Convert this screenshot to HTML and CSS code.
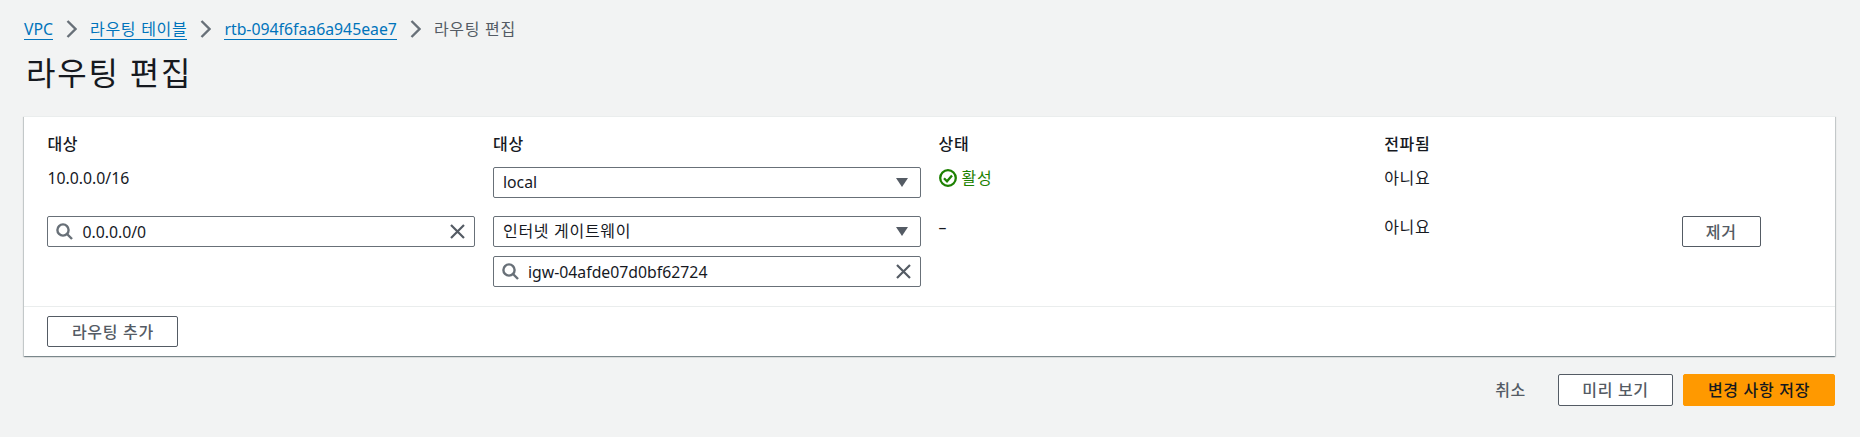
FILE: index.html
```html
<!DOCTYPE html>
<html lang="ko">
<head>
<meta charset="utf-8">
<title>라우팅 편집</title>
<link rel="stylesheet" href="styles.css">
</head>
<body>
<nav class="crumbs">
  <a class="crumb-link latin" href="#">VPC</a>
  <svg class="chev" viewBox="0 0 11 18"><path d="M1.5 1 9.5 9 1.5 17"/></svg>
  <a class="crumb-link" href="#">라우팅 테이블</a>
  <svg class="chev" viewBox="0 0 11 18"><path d="M1.5 1 9.5 9 1.5 17"/></svg>
  <a class="crumb-link latin" href="#">rtb-094f6faa6a945eae7</a>
  <svg class="chev" viewBox="0 0 11 18"><path d="M1.5 1 9.5 9 1.5 17"/></svg>
  <span class="crumb-current">라우팅 편집</span>
</nav>
<h1 class="title">라우팅 편집</h1>
<section class="card">
  <div class="routes">
    <div class="head">대상</div>
    <div class="head">대상</div>
    <div class="head">상태</div>
    <div class="head">전파됨</div>
    <div></div>

    <div class="cell latin">10.0.0.0/16</div>
    <div class="field select"><span class="latin">local</span><svg class="caret" viewBox="0 0 12 9"><path d="M0 0H12L6 9Z"/></svg></div>
    <div class="cell status"><svg class="ok" viewBox="0 0 18 18"><circle cx="9" cy="9" r="7.8"/><path d="M5 9.2 8 12.2 13 6.4"/></svg><span>활성</span></div>
    <div class="cell">아니요</div>
    <div></div>

    <div class="field search">
      <svg class="mag" viewBox="0 0 17 17"><circle cx="7" cy="7" r="5.6"/><path d="M11 11 16 16"/></svg>
      <span class="val latin">0.0.0.0/0</span>
      <svg class="clear" viewBox="0 0 15 15"><path d="M1 1 14 14M14 1 1 14"/></svg>
    </div>
    <div class="stack">
      <div class="field select"><span>인터넷 게이트웨이</span><svg class="caret" viewBox="0 0 12 9"><path d="M0 0H12L6 9Z"/></svg></div>
      <div class="field search">
        <svg class="mag" viewBox="0 0 17 17"><circle cx="7" cy="7" r="5.6"/><path d="M11 11 16 16"/></svg>
        <span class="val latin">igw-04afde07d0bf62724</span>
        <svg class="clear" viewBox="0 0 15 15"><path d="M1 1 14 14M14 1 1 14"/></svg>
      </div>
    </div>
    <div class="cell dash latin">–</div>
    <div class="cell">아니요</div>
    <div><button class="btn btn-remove">제거</button></div>
  </div>
  <div class="card-foot"><button class="btn btn-add">라우팅 추가</button></div>
</section>
<div class="actions">
  <a class="cancel" href="#">취소</a>
  <button class="btn btn-preview">미리 보기</button>
  <button class="btn btn-save">변경 사항 저장</button>
</div>
</body>
</html>
```
FILE: styles.css
```css
* { box-sizing: border-box; }
html, body { height: 100%; }
body {
  margin: 0;
  padding: 0 25px 0 24px;
  background: #f2f3f3;
  color: #16191f;
  font-family: "Noto Sans", "Noto Sans CJK KR", sans-serif;
  font-size: 16px;
  letter-spacing: .7px;
  line-height: 20px;
  overflow: hidden;
}
.latin { font-size: 15.8px; letter-spacing: 0; }
.crumbs {
  display: flex;
  align-items: center;
  gap: 13px;
  height: 22px;
  margin-top: 18px;
}
.crumb-link {
  color: #0073bb;
  text-decoration: none;
  border-bottom: 1px solid #0073bb;
  line-height: 20px;
}
.crumb-current { color: #545b64; }
.chev { width: 11px; height: 18px; flex: none; }
.chev path { fill: none; stroke: #687078; stroke-width: 2.4; }
.title {
  margin: 13px 0 0 2px;
  font-size: 32px;
  font-weight: 400;
  letter-spacing: 1.8px;
  line-height: 40px;
  height: 63px;
}
.card {
  background: #fff;
  border-top: 1px solid #eaeded;
  box-shadow: 0 1px 1px 0 rgba(0,28,36,.3), 1px 1px 1px 0 rgba(0,28,36,.15), -1px 1px 1px 0 rgba(0,28,36,.15);
  height: 240px;
}
.routes {
  display: grid;
  grid-template-columns: 427.6px 427.6px 427.6px 279.5px 79px;
  column-gap: 18px;
  grid-template-rows: 20px 44px auto;
  padding: 17px 24px 18px 23.4px;
  height: 189px;
}
.head { font-weight: 500; }
.routes > :nth-child(n+6) { margin-top: 13px; }
.routes > :nth-child(n+11) { margin-top: 18px; }
.cell { padding-top: 1px; }
.field {
  display: flex;
  align-items: center;
  height: 31px;
  background: #fff;
  border: 1px solid #687078;
  border-radius: 2px;
}
.select { justify-content: space-between; padding: 0 12px 2px 9px; }
.caret { width: 12px; height: 9px; fill: #545b64; margin-top: 2px; }
.search { padding: 0 9px 0 8px; }
.mag { width: 17px; height: 17px; flex: none; fill: none; stroke: #687078; stroke-width: 2.4; }
.val { flex: 1; margin-left: 9px; }
.clear { width: 15px; height: 15px; flex: none; fill: none; stroke: #545b64; stroke-width: 2.2; }
.stack { display: flex; flex-direction: column; gap: 9px; }
.status { display: flex; align-items: center; gap: 5px; height: 20px; color: #1d8102; padding-top: 0; margin-top: 14px !important; }
.ok { width: 18px; height: 18px; flex: none; fill: none; stroke: #1d8102; stroke-width: 2.3; }
.dash { padding-top: 1px; }
.card-foot {
  border-top: 1px solid #eaeded;
  padding: 9px 24px 0 23.4px;
}
.btn {
  display: inline-block;
  height: 31px;
  padding: 0;
  background: #fff;
  border: 1px solid #545b64;
  border-radius: 2px;
  color: #545b64;
  font: 500 16px/20px "Noto Sans", "Noto Sans CJK KR", sans-serif;
  letter-spacing: .7px;
}
.btn-remove { width: 79px; }
.btn-add { width: 131px; }
.actions {
  display: flex;
  justify-content: flex-end;
  align-items: center;
  margin-top: 18px;
  height: 32px;
}
.cancel { color: #545b64; font-weight: 500; text-decoration: none; margin-right: 32px; }
.btn-preview { width: 115px; height: 32px; margin-right: 10px; }
.btn-save { width: 152px; height: 32px; background: #ff9900; border-color: #ff9900; color: #16191f; }
```
